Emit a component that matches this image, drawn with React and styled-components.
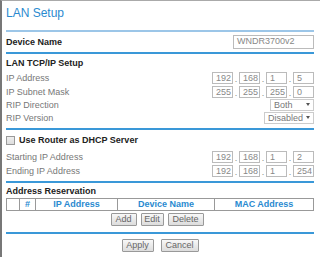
import React from "react";
import styled, { createGlobalStyle } from "styled-components";

const Global = createGlobalStyle`
  html, body { margin: 0; padding: 0; background: #fff; }
  body { font-family: "Liberation Sans", Arial, sans-serif; font-size: 9px; color: #666; }
`;

const Frame = styled.div`
  width: 320px;
  height: 257px;
  box-sizing: border-box;
  border-left: 2px solid #777;
  border-top: 1px solid #aaa;
  padding: 0 6px 0 4px;
  overflow: hidden;
`;

const Title = styled.h1`
  margin: 0;
  font-weight: normal;
  font-size: 12px;
  color: #2a8ad0;
  height: 29px;
  line-height: 25px;
`;

const Rule = styled.div`
  height: 2px;
  background: ${(p) => (p.$light ? "#9cc6e8" : "#3a98d8")};
  margin: ${(p) => p.$m || "0"};
`;

const Row = styled.div`
  display: flex;
  align-items: center;
  justify-content: space-between;
  height: ${(p) => p.$h || 13}px;
`;

const Bold = styled.div`
  font-weight: bold;
  color: #222;
  display: flex;
  align-items: center;
  gap: 4px;
`;

const Label = styled.div`
  color: #777;
`;

const TextBox = styled.div`
  box-sizing: border-box;
  width: ${(p) => p.$w || 21}px;
  height: ${(p) => p.$ht || 12}px;
  border: 1px solid #bbb;
  padding: 0 3px;
  line-height: 10px;
  color: #888;
  background: #fff;
`;

const IpGroup = styled.div`
  display: flex;
  align-items: flex-end;
`;

const Dot = styled.span`
  width: 6px;
  text-align: center;
  color: #888;
  line-height: 10px;
`;

const Select = styled.div`
  box-sizing: border-box;
  width: ${(p) => p.$w || 44}px;
  height: 12px;
  border: 1px solid #ccc;
  display: flex;
  align-items: center;
  justify-content: space-between;
  padding: 0 3px 0 3px;
  color: #777;
  white-space: nowrap;
`;

const Caret = styled.span`
  flex: none;
  margin-left: 3px;
  width: 0;
  height: 0;
  border-left: 2px solid transparent;
  border-right: 2px solid transparent;
  border-top: 3px solid #555;
`;

const Checkbox = styled.span`
  box-sizing: border-box;
  width: 9px;
  height: 9px;
  border: 1px solid #999;
  background: linear-gradient(#eee, #ddd);
`;

const Table = styled.div`
  display: grid;
  grid-template-columns: 12px 16px 82px 97px 1fr;
  border: 1px solid #999;
  height: 13px;
  box-sizing: border-box;
`;

const Th = styled.div`
  border-left: ${(p) => (p.$first ? "none" : "1px solid #999")};
  color: #2a8ad0;
  font-weight: bold;
  text-align: center;
  line-height: 11px;
`;

const Buttons = styled.div`
  display: flex;
  justify-content: center;
  gap: ${(p) => p.$gap || 4}px;
  height: ${(p) => p.$h || 16}px;
  align-items: center;
  margin-left: ${(p) => p.$ml || 0}px;
`;

const Button = styled.button`
  font-family: inherit;
  font-size: 9px;
  color: #666;
  height: 13px;
  padding: 0;
  width: ${(p) => p.$w}px;
  border: 1px solid #999;
  border-radius: 1px;
  background: linear-gradient(#f8f8f8, #dcdcdc);
  line-height: 11px;
`;

function Ip({ values }) {
  return (
    <IpGroup>
      {values.map((v, i) => (
        <React.Fragment key={i}>
          {i > 0 && <Dot>.</Dot>}
          <TextBox>{v}</TextBox>
        </React.Fragment>
      ))}
    </IpGroup>
  );
}

export default function App() {
  return (
    <>
      <Global />
      <Frame>
        <Title>LAN Setup</Title>
        <Rule $light />
        <Row $h={20}>
          <Bold>Device Name</Bold>
          <TextBox $w={81} $ht={14}>WNDR3700v2</TextBox>
        </Row>
        <Rule />
        <Row $h={17}>
          <Bold>LAN TCP/IP Setup</Bold>
        </Row>
        <Row $h={14}>
          <Label>IP Address</Label>
          <Ip values={["192", "168", "1", "5"]} />
        </Row>
        <Row $h={13}>
          <Label>IP Subnet Mask</Label>
          <Ip values={["255", "255", "255", "0"]} />
        </Row>
        <Row $h={13}>
          <Label>RIP Direction</Label>
          <Select>Both<Caret /></Select>
        </Row>
        <Row $h={13}>
          <Label>RIP Version</Label>
          <Select $w={50}>Disabled<Caret /></Select>
        </Row>
        <Rule $m="4px 0 0" />
        <Row $h={20}>
          <Bold><Checkbox />Use Router as DHCP Server</Bold>
        </Row>
        <Row $h={14}>
          <Label>Starting IP Address</Label>
          <Ip values={["192", "168", "1", "2"]} />
        </Row>
        <Row $h={14}>
          <Label>Ending IP Address</Label>
          <Ip values={["192", "168", "1", "254"]} />
        </Row>
        <Rule $m="3px 0 0" />
        <Row $h={15}>
          <Bold>Address Reservation</Bold>
        </Row>
        <Table>
          <Th $first />
          <Th>#</Th>
          <Th>IP Address</Th>
          <Th>Device Name</Th>
          <Th>MAC Address</Th>
        </Table>
        <Buttons $h={16} $ml={-6}>
          <Button $w={26}>Add</Button>
          <Button $w={23}>Edit</Button>
          <Button $w={36}>Delete</Button>
        </Buttons>
        <Rule $m="5px 0 0" />
        <Buttons $h={22} $gap={7}>
          <Button $w={32}>Apply</Button>
          <Button $w={38}>Cancel</Button>
        </Buttons>
      </Frame>
    </>
  );
}
